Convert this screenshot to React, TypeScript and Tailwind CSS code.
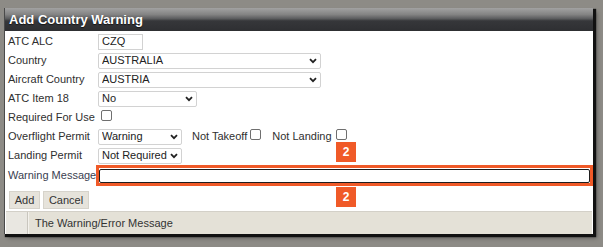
const Chevron = () => (
  <svg width="8" height="6" viewBox="0 0 8 6" className="pointer-events-none absolute right-[4px] top-1/2 -translate-y-1/2">
    <path d="M1 1.2 L4 4.2 L7 1.2" fill="none" stroke="#222" strokeWidth="1.8" />
  </svg>
)

const Select = ({ value, w }: { value: string; w: string }) => (
  <span className={`relative inline-flex h-[16px] ${w}`}>
    <select
      defaultValue={value}
      className="h-full w-full appearance-none rounded-[2px] border border-[#d2d2d2] bg-white pl-[3px] text-[11px] leading-none text-[#222] outline-none"
    >
      <option>{value}</option>
    </select>
    <Chevron />
  </span>
)

const Check = () => (
  <span className="inline-block h-[11px] w-[11px] rounded-[2px] border border-[#6f6f6f] bg-white" />
)

const Row = ({ label, children }: { label: string; children?: React.ReactNode }) => (
  <div className="flex h-[19px] items-center">
    <span className="w-[90px] shrink-0 text-[#2f2f2f]">{label}</span>
    {children}
  </div>
)

const Badge = ({ top }: { top: string }) => (
  <span
    className={`absolute left-[331px] ${top} flex h-[20px] w-[20px] items-center justify-center bg-[#f05a28] text-[12px] font-bold text-white`}
  >
    2
  </span>
)

export default function App() {
  return (
    <div className="h-[247px] w-[603px] bg-[#8d8b86] pl-[4px] pt-[8px] font-['Liberation_Sans',Arial,sans-serif] text-[11px]">
      <div className="relative flex h-[226px] w-[589px] flex-col border-l border-[#4a4a4a] bg-white shadow-[2px_2px_1px_1px_#111,4px_4px_4px_rgba(0,0,0,0.35)]">
        {/* title */}
        <div className="flex h-[23px] items-center bg-[linear-gradient(to_bottom,#a2a2a2_0%,#848484_28%,#5c5d5f_46%,#36373a_56%,#2e2f32_100%)] pl-[4px] text-[13px] font-bold text-white [text-shadow:0_1px_1px_rgba(0,0,0,0.6)]">
          Add Country Warning
        </div>

        <div className="flex flex-col pl-[3px] pt-[1px]">
          <Row label="ATC ALC">
            <input
              defaultValue="CZQ"
              className="h-[16px] w-[45px] border border-[#d2d2d2] bg-white pl-[3px] text-[11px] text-[#222] outline-none"
            />
          </Row>
          <Row label="Country">
            <Select value="AUSTRALIA" w="w-[223px]" />
          </Row>
          <Row label="Aircraft Country">
            <Select value="AUSTRIA" w="w-[223px]" />
          </Row>
          <Row label="ATC Item 18">
            <Select value="No" w="w-[99px]" />
          </Row>
          <Row label="Required For Use">
            <span className="ml-[3px]">
              <Check />
            </span>
          </Row>
          <Row label="Overflight Permit">
            <Select value="Warning" w="w-[84px]" />
            <span className="ml-[10px] text-[#2f2f2f]">Not Takeoff</span>
            <span className="ml-[3px] -mt-[4px] flex">
              <Check />
            </span>
            <span className="ml-[11px] text-[#2f2f2f]">Not Landing</span>
            <span className="ml-[4px] -mt-[4px] flex">
              <Check />
            </span>
          </Row>
          <Row label="Landing Permit">
            <Select value="Not Required" w="w-[84px]" />
          </Row>
          <div className="flex h-[21px] items-center">
            <span className="w-[90px] shrink-0 text-[#3a4050]">Warning Message</span>
            <div className="-ml-[2px] flex h-[21px] flex-1 items-center border-[3px] border-[#f05a28] pr-[0px]">
              <input className="h-[14px] w-full rounded-[2px] border-[1.5px] border-[#1e1e1e] bg-white outline-none" />
            </div>
          </div>
          <div className="mt-[5px] flex gap-[3px] pl-[1px]">
            <button className="h-[18px] w-[31px] border border-[#d6d3cb] bg-[#e6e3db] text-[11px] text-[#333]">
              Add
            </button>
            <button className="h-[18px] w-[46px] border border-[#d6d3cb] bg-[#e6e3db] text-[11px] text-[#333]">
              Cancel
            </button>
          </div>
        </div>

        {/* footer */}
        <div className="mt-auto ml-[1px] mr-[1px] flex h-[23px] border-t border-[#d3d0c8] bg-[#e4e1d7]">
          <div className="w-[22px] border-r border-[#c9c6be] bg-[#e9e7e1]" />
          <div className="flex items-center border-l border-[#f3f1ec] pl-[6px] text-[#333]">
            The Warning/Error Message
          </div>
        </div>

        <Badge top="top-[134px]" />
        <Badge top="top-[179px]" />
      </div>
    </div>
  )
}
